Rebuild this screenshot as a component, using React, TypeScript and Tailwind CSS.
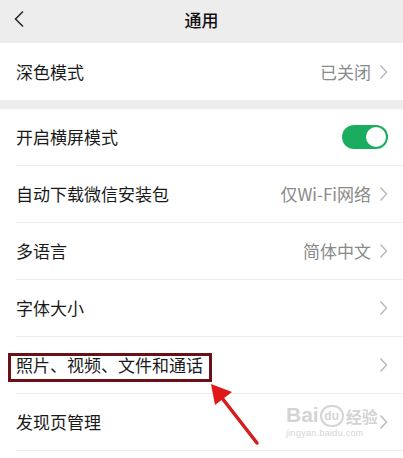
import React from "react";

const font = { fontFamily: '"Noto Sans CJK SC", "Noto Sans", sans-serif' };

function Chevron() {
  return (
    <svg width="9" height="16" viewBox="0 0 9 16" className="ml-[8px] shrink-0">
      <path d="M1.5 1.5 L7.5 8 L1.5 14.5" fill="none" stroke="#b8b8b8" strokeWidth="1.4" />
    </svg>
  );
}

function Row({
  label,
  value,
  chevron = true,
  toggle = false,
  last = false,
  highlight = false,
}: {
  label: string;
  value?: string;
  chevron?: boolean;
  toggle?: boolean;
  last?: boolean;
  highlight?: boolean;
}) {
  return (
    <div className="bg-white pl-4">
      <div
        className={`flex h-[57px] items-center pr-[15px] ${last ? "" : "border-b border-[#ececec]"}`}
      >
        <span className="relative flex-1 text-[17px] text-[#1a1a1a]">
          {label}
          {highlight && (
            <span className="absolute left-[-8px] top-[1px] h-[29px] w-[204px] border-[3px] border-[#6a1016]" />
          )}
        </span>
        {value && <span className="text-[17px] text-[#8a8a8a]">{value}</span>}
        {toggle ? (
          <div className="flex h-[24px] w-[46px] items-center justify-end rounded-full bg-[#1aad5f] pr-[2px]">
            <div className="h-[20px] w-[20px] rounded-full bg-white" />
          </div>
        ) : (
          chevron && <Chevron />
        )}
      </div>
    </div>
  );
}

export default function App() {
  return (
    <div className="relative h-[458px] w-[403px] overflow-hidden bg-[#ededed]" style={font}>
      <div className="relative flex h-[43px] items-center justify-center pb-[3px]">
        <svg width="12" height="18" viewBox="0 0 12 18" className="absolute left-[13px] top-[10px]">
          <path d="M10 1.5 L2.5 9 L10 16.5" fill="none" stroke="#222" strokeWidth="1.5" />
        </svg>
        <span className="text-[17px] font-medium text-[#111]">通用</span>
      </div>
      <Row label="深色模式" value="已关闭" last />
      <div className="h-[9px]" />
      <Row label="开启横屏模式" toggle />
      <Row label="自动下载微信安装包" value="仅Wi-Fi网络" />
      <Row label="多语言" value="简体中文" />
      <Row label="字体大小" />
      <Row label="照片、视频、文件和通话" highlight />
      <div className="relative">
        <Row label="发现页管理" />
        <div className="pointer-events-none absolute left-[286px] top-[9px] flex flex-col items-start text-[#d4d4d4]">
          <div className="flex items-end">
            <span className="text-[21px] font-bold leading-[24px]" style={{ fontFamily: '"Liberation Sans", sans-serif' }}>
              Bai
            </span>
            <span className="relative ml-[1px] flex h-[22px] w-[24px] items-center justify-center rounded-full border-2 border-[#d4d4d4] text-[12px] font-bold leading-none" style={{ fontFamily: '"Liberation Sans", sans-serif' }}>
              du
            </span>
            <span className="ml-[2px] text-[16px] font-bold leading-[22px]">经验</span>
          </div>
          <span className="mt-[1px] text-[9px] leading-[10px] tracking-[0.3px]" style={{ fontFamily: '"Liberation Sans", sans-serif' }}>
            jingyan.baidu.com
          </span>
        </div>
      </div>
      <Row label="" />
      <svg
        className="pointer-events-none absolute left-0 top-0"
        width="403"
        height="458"
        viewBox="0 0 403 458"
      >
        <line x1="257" y1="443" x2="222" y2="398" stroke="#d61c1c" strokeWidth="3.5" strokeLinecap="round" />
        <polygon points="211,384 232,392 215,405" fill="#e01818" />
      </svg>
    </div>
  );
}
